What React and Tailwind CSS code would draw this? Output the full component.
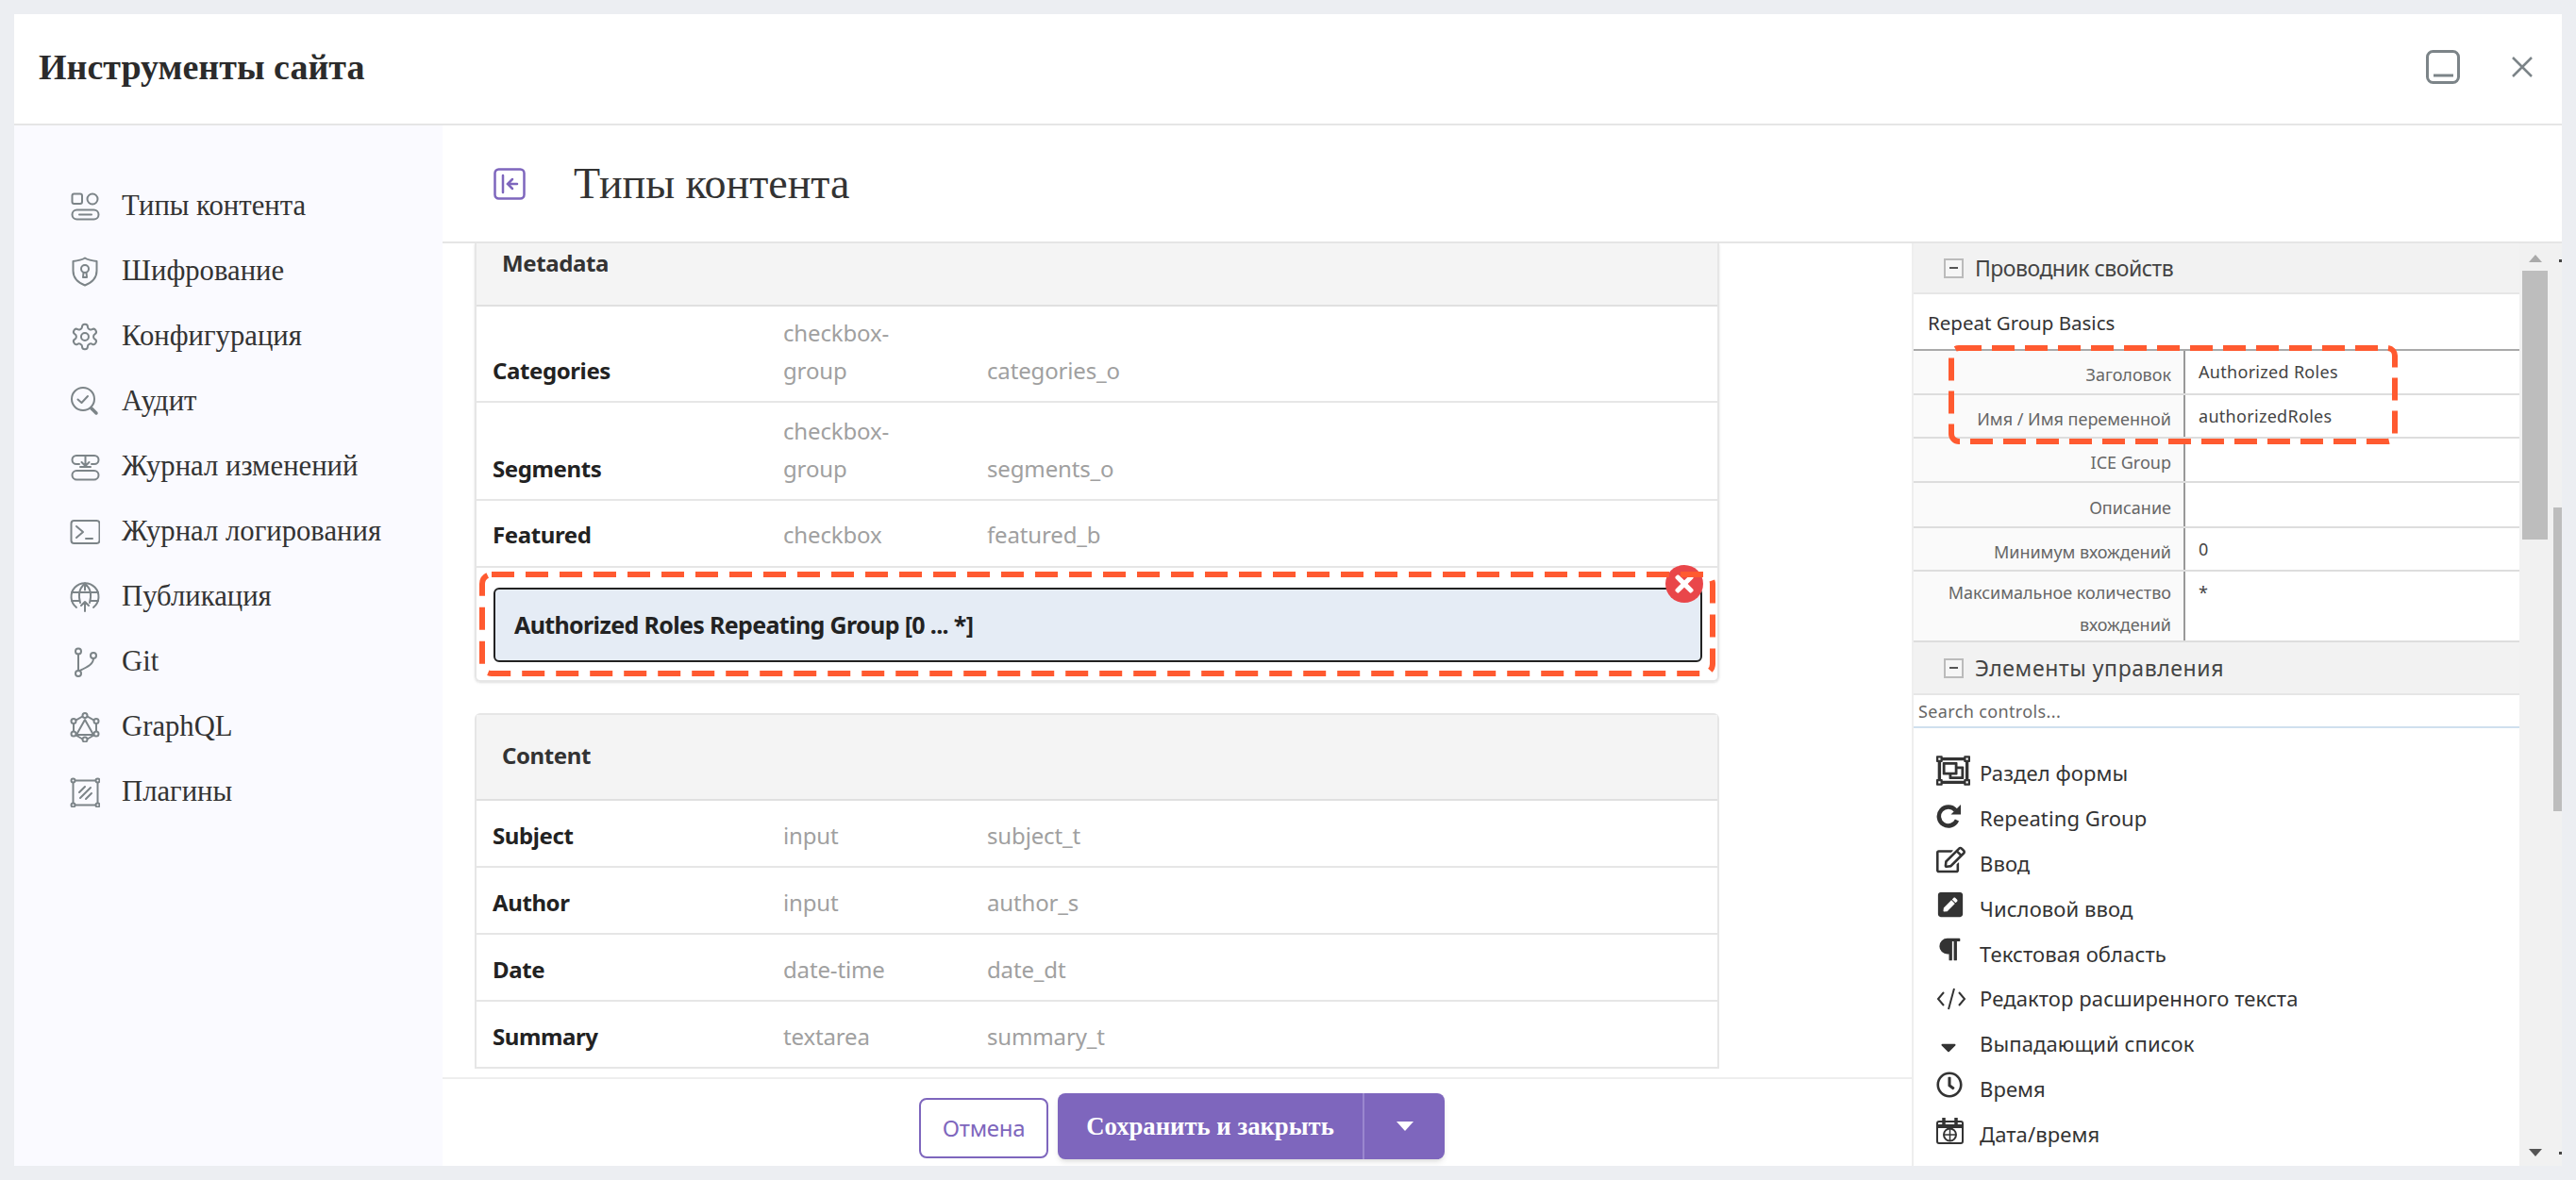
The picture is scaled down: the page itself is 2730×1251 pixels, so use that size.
import { FaRegEdit, FaPenSquare, FaParagraph, FaCaretDown, FaRegClock, FaRegObjectGroup, FaTimes } from 'react-icons/fa';

const sans = "font-['Noto_Sans',sans-serif]";
const serif = "font-['Liberation_Serif',serif]";

const IconBase = ({ children }) => (
  <svg width="32" height="32" viewBox="0 0 32 32" fill="none" stroke="#7c8488" strokeWidth="2" strokeLinecap="round" strokeLinejoin="round" className="shrink-0">
    {children}
  </svg>
);

const menu = [
  {
    label: 'Типы контента',
    icon: (
      <>
        <rect x="2.5" y="2.5" width="10.5" height="10.5" rx="2" />
        <circle cx="24" cy="8" r="5.5" />
        <rect x="2.5" y="19.5" width="28" height="10" rx="5" />
        <path d="M10 24.5h13" />
      </>
    ),
  },
  {
    label: 'Шифрование',
    icon: (
      <>
        <path d="M16 1.5c4 2.5 8 3 12.5 3.5v10c0 7-5 12.5-12.5 15.5C8.5 27.5 3.5 22 3.5 15V5C8 4.5 12 4 16 1.5z" />
        <circle cx="16" cy="13" r="4" />
        <path d="M14.5 17l-.5 5h4l-.5-5" />
      </>
    ),
  },
  {
    label: 'Конфигурация',
    icon: (
      <g transform="scale(1.33)" strokeWidth="1.5">
        <path d="M12.22 2h-.44a2 2 0 0 0-2 2v.18a2 2 0 0 1-1 1.73l-.43.25a2 2 0 0 1-2 0l-.15-.08a2 2 0 0 0-2.73.73l-.22.38a2 2 0 0 0 .73 2.73l.15.1a2 2 0 0 1 1 1.72v.51a2 2 0 0 1-1 1.74l-.15.09a2 2 0 0 0-.73 2.73l.22.38a2 2 0 0 0 2.73.73l.15-.08a2 2 0 0 1 2 0l.43.25a2 2 0 0 1 1 1.73V20a2 2 0 0 0 2 2h.44a2 2 0 0 0 2-2v-.18a2 2 0 0 1 1-1.73l.43-.25a2 2 0 0 1 2 0l.15.08a2 2 0 0 0 2.73-.73l.22-.39a2 2 0 0 0-.73-2.73l-.15-.08a2 2 0 0 1-1-1.74v-.5a2 2 0 0 1 1-1.74l.15-.09a2 2 0 0 0 .73-2.73l-.22-.38a2 2 0 0 0-2.73-.73l-.15.08a2 2 0 0 1-2 0l-.43-.25a2 2 0 0 1-1-1.73V4a2 2 0 0 0-2-2z" />
        <circle cx="12" cy="12" r="3" />
      </g>
    ),
  },
  {
    label: 'Аудит',
    icon: (
      <>
        <circle cx="14" cy="13" r="12" />
        <path d="M8.5 13.5l4 3.5 6.5-7" />
        <path d="M23 23l5 5" strokeWidth="3.5" />
      </>
    ),
  },
  {
    label: 'Журнал изменений',
    icon: (
      <>
        <path d="M10 13H7a4.5 4.5 0 0 1 0-9h19a4.5 4.5 0 0 1 0 9h-3" />
        <path d="M16.5 5v9M12.5 11l4 4 4-4M11 16h11" />
        <rect x="2.5" y="20" width="28" height="9.5" rx="4.7" />
      </>
    ),
  },
  {
    label: 'Журнал логирования',
    icon: (
      <>
        <rect x="1.5" y="4" width="30" height="24" rx="3" />
        <path d="M7 10l7 6-7 6M17 23h7" />
      </>
    ),
  },
  {
    label: 'Публикация',
    icon: (
      <>
        <path d="M7 27A14.5 14.5 0 1 1 25 27" />
        <path d="M16 1.5v7M16 1.5C9 8 9 14 11 22M16 1.5c7 6.5 7 12.5 5 20.5M2 11h28M2 20h8M22 20h8" />
        <path d="M16 31V21M12 25l4-4 4 4" />
      </>
    ),
  },
  {
    label: 'Git',
    icon: (
      <>
        <circle cx="9" cy="4.5" r="3" />
        <circle cx="9" cy="28" r="3" />
        <circle cx="25" cy="9" r="3" />
        <path d="M9 7.5V25M25 12c0 6-6 9-14.5 13" />
      </>
    ),
  },
  {
    label: 'GraphQL',
    icon: (
      <>
        <path d="M16 3L28 10v13l-12 7-12-7V10z" />
        <path d="M16 8L7 24h18z" />
        <circle cx="16" cy="3.5" r="2.5" fill="#fafaff" />
        <circle cx="16" cy="29" r="2.5" fill="#fafaff" />
        <circle cx="4" cy="9.5" r="2.5" fill="#fafaff" />
        <circle cx="28" cy="9.5" r="2.5" fill="#fafaff" />
        <circle cx="4" cy="23" r="2.5" fill="#fafaff" />
        <circle cx="28" cy="23" r="2.5" fill="#fafaff" />
      </>
    ),
  },
  {
    label: 'Плагины',
    icon: (
      <>
        <rect x="3.5" y="3.5" width="26" height="26" />
        <circle cx="3.5" cy="3.5" r="2" fill="#fafaff" />
        <circle cx="29.5" cy="3.5" r="2" fill="#fafaff" />
        <circle cx="3.5" cy="29.5" r="2" fill="#fafaff" />
        <circle cx="29.5" cy="29.5" r="2" fill="#fafaff" />
        <path d="M10 16l6-6M11 22l11-11M17 23l6-6" />
      </>
    ),
  },
];

const metadataRows = [
  { name: 'Categories', type: 'checkbox-group', id: 'categories_o', h: 'h-[102px] pb-[12px]' },
  { name: 'Segments', type: 'checkbox-group', id: 'segments_o', h: 'h-[104px] pb-[12px]' },
  { name: 'Featured', type: 'checkbox', id: 'featured_b', h: 'h-[71px] pb-[13px]' },
];

const contentRows = [
  { name: 'Subject', type: 'input', id: 'subject_t' },
  { name: 'Author', type: 'input', id: 'author_s' },
  { name: 'Date', type: 'date-time', id: 'date_dt' },
  { name: 'Summary', type: 'textarea', id: 'summary_t' },
];

const props = [
  { label: 'Заголовок', value: 'Authorized Roles', h: 'h-[47px]' },
  { label: 'Имя / Имя переменной', value: 'authorizedRoles', h: 'h-[46px]' },
  { label: 'ICE Group', value: '', h: 'h-[47px]' },
  { label: 'Описание', value: '', h: 'h-[48px]' },
  { label: 'Минимум вхождений', value: '0', h: 'h-[46px]' },
  { label: 'Максимальное количество вхождений', value: '*', h: 'h-[75px]' },
];

const CodeIcon = () => (
  <svg width="32" height="26" viewBox="0 0 32 26" fill="none" stroke="#333" strokeWidth="2">
    <path d="M8 6l-6 7 6 7M24 6l6 7-6 7M19 2l-6 22" />
  </svg>
);

const RepeatIcon = () => (
  <svg width="27" height="27" viewBox="0 0 27 27" fill="none">
    <path d="M20.5 8A10 10 0 1 0 22 18.5" stroke="#333" strokeWidth="4.5" />
    <path d="M26 2v10.5H15.5z" fill="#333" />
  </svg>
);

const CalendarIcon = () => (
  <svg width="29" height="29" viewBox="0 0 29 29" fill="none" stroke="#333" strokeWidth="2">
    <rect x="1" y="5" width="27" height="23" rx="2" />
    <path d="M1 10h27" strokeWidth="4" />
    <path d="M8 1v7M21 1v7" strokeWidth="3.5" />
    <circle cx="14.5" cy="19" r="6.5" />
    <path d="M14.5 12.5v13M8 19h13" strokeWidth="1.5" />
  </svg>
);

const controls = [
  { label: 'Раздел формы', icon: <FaRegObjectGroup size={36} />, up: 'mb-[6px]' },
  { label: 'Repeating Group', icon: <RepeatIcon />, up: 'mb-[6px]' },
  { label: 'Ввод', icon: <FaRegEdit size={31} />, up: 'mb-[8px]' },
  { label: 'Числовой ввод', icon: <FaPenSquare size={30} />, up: 'mb-[8px]' },
  { label: 'Текстовая область', icon: <FaParagraph size={27} />, up: 'mb-[10px]' },
  { label: 'Редактор расширенного текста', icon: <CodeIcon />, up: '' },
  { label: 'Выпадающий список', icon: <FaCaretDown size={26} />, up: 'mt-[6px]' },
  { label: 'Время', icon: <FaRegClock size={28} />, up: 'mb-[8px]' },
  { label: 'Дата/время', icon: <CalendarIcon />, up: 'mb-[8px]' },
];

function Row({ row, h }) {
  return (
    <div className={`${h} box-border flex items-end border-b-2 border-[#e6e6e6] text-[24px] leading-[40px]`}>
      <div className="w-[325px] pl-[17px] shrink-0 font-bold tracking-[-0.4px] text-[#222]">{row.name}</div>
      <div className="w-[216px] pr-[60px] shrink-0 tracking-[-0.15px] text-[#a0a0a0]">{row.type}</div>
      <div className="tracking-[-0.15px] text-[#a0a0a0]">{row.id}</div>
    </div>
  );
}

function PanelHeader({ title, h, spacing }) {
  return (
    <div className={`${h} box-border flex items-center bg-[#f2f2f2] pl-[32px] border-b-2 border-[#e6e6e6] shrink-0`}>
      <span className="w-[21px] h-[21px] flex items-center justify-center border-2 border-[#bbb] bg-[#f6f6f6] mr-[12px]">
        <span className="w-[9px] h-[2px] bg-[#555]" />
      </span>
      <span className={`${spacing} text-[23px] text-[#444]`}>{title}</span>
    </div>
  );
}

export default function App() {
  return (
    <div className={`${sans} h-[1251px] w-[2730px] bg-[#eceef2] p-[15px] overflow-hidden`}>
      <div className="h-full bg-white flex flex-col overflow-hidden">
        <header className="h-[118px] shrink-0 box-border border-b-2 border-[#e5e5e5] flex items-center pl-[26px] pr-[30px] pb-[4px]">
          <h1 className={`${serif} text-[38px] font-bold text-[#2b2b2b]`}>Инструменты сайта</h1>
          <div className="ml-auto flex items-center gap-[54px]">
            <svg width="36" height="36" viewBox="0 0 36 36" fill="none" stroke="#7c8488" strokeWidth="3">
              <rect x="1.5" y="1.5" width="33" height="33" rx="6" />
              <path d="M8 27h21" />
            </svg>
            <svg width="24" height="24" viewBox="0 0 24 24" fill="none" stroke="#7c8488" strokeWidth="2.5">
              <path d="M2 2l20 20M22 2L2 22" />
            </svg>
          </div>
        </header>

        <div className="flex-1 flex min-h-0">
          <aside className="w-[454px] shrink-0 bg-[#fafaff] pt-[51px] pl-[59px]">
            {menu.map((item) => (
              <div key={item.label} className="h-[69px] flex items-center gap-[23px]">
                <IconBase>{item.icon}</IconBase>
                <span className={`${serif} text-[30.7px] text-[#333]`}>{item.label}</span>
              </div>
            ))}
          </aside>

          <main className="flex-1 flex flex-col min-w-0">
            <div className="h-[125px] shrink-0 box-border border-b-2 border-[#e5e5e5] flex items-center pl-[54px]">
              <svg width="34" height="34" viewBox="0 0 34 34" fill="none" stroke="#7e66bd" strokeWidth="2.5" strokeLinecap="round">
                <rect x="1.5" y="1.5" width="31" height="31" rx="4" />
                <path d="M10 8v18M25 17H16M20 12l-5 5 5 5" />
              </svg>
              <h2 className={`${serif} ml-[51px] text-[46px] font-normal text-[#333]`}>Типы контента</h2>
            </div>

            <div className="flex-1 flex min-h-0">
              <div className="w-[1559px] shrink-0 flex flex-col min-h-0 border-r-2 border-[#eee] box-border">
                <div className="h-[884px] shrink-0 overflow-hidden pl-[34px] box-border">
                  <section className="relative w-[1319px] box-border border-x-2 border-b-2 border-[#e6e6e6] rounded-b-md shadow-sm">
                    <div className="h-[67px] box-border bg-[#f4f4f4] border-b-2 border-[#e0e0e0] pl-[27px] pt-[1px] text-[24px] font-bold leading-[40px] tracking-[-0.4px] text-[#333]">Metadata</div>
                    {metadataRows.map((r) => <Row key={r.name} row={r} h={r.h} />)}
                    <div className="h-[119px] box-border pt-[21px] pl-[18px]">
                      <div className="w-[1281px] h-[79px] box-border flex items-center pl-[20px] bg-[#e5ecf5] border-2 border-[#222] rounded-md text-[25px] font-bold tracking-[-0.64px] text-[#222]">
                        Authorized Roles Repeating Group [0 ... *]
                      </div>
                    </div>
                    <span className="absolute left-[1260px] top-[341px] w-[40px] h-[40px] rounded-full bg-[#e9464a] flex items-center justify-center text-white">
                      <FaTimes size={28} />
                    </span>
                    <svg className="absolute left-[3px] top-[348px]" width="1310" height="111" fill="none" stroke="#ff5a30" strokeWidth="6" strokeDasharray="24 12">
                      <rect x="3" y="3" width="1304" height="105" rx="10" />
                    </svg>
                  </section>

                  <section className="mt-[33px] w-[1319px] box-border border-x-2 border-t-2 border-[#e6e6e6] rounded-t-md">
                    <div className="h-[91px] box-border bg-[#f4f4f4] border-b-2 border-[#e0e0e0] pl-[27px] pb-[3px] flex items-center text-[24px] font-bold tracking-[-0.4px] text-[#333]">Content</div>
                    {contentRows.map((r) => <Row key={r.name} row={r} h="h-[71px] pb-[12px]" />)}
                  </section>
                </div>

                <footer className="flex-1 box-border border-t-2 border-[#eee] flex items-start justify-center gap-[10px] pt-[15px] pl-[10px]">
                  <button className="mt-[5px] w-[137px] h-[64px] box-border border-2 border-[#7e66bd] rounded-lg bg-white text-[24px] tracking-[-0.3px] text-[#7e66bd]">Отмена</button>
                  <div className="w-[410px] h-[70px] flex rounded-lg bg-[#7e66bd] shadow-md text-white">
                    <div className={`${serif} w-[325px] flex items-center justify-center text-[26.7px] font-bold border-r-2 border-[#9a87cf]`}>Сохранить и закрыть</div>
                    <div className="flex-1 flex items-center justify-center">
                      <span className="w-0 h-0 border-x-[9px] border-x-transparent border-t-[10px] border-t-white" />
                    </div>
                  </div>
                </footer>
              </div>

              <div className="flex-1 flex min-w-0">
                <div className="w-[642px] shrink-0 relative flex flex-col overflow-hidden">
                  <PanelHeader title="Проводник свойств" h="h-[54px]" spacing="tracking-[-0.5px]" />
                  <div className="h-[60px] box-border shrink-0 flex items-center pl-[15px] pt-[2px] border-b-2 border-[#aaa] text-[20.5px] text-[#333]">Repeat Group Basics</div>
                  {props.map((p) => (
                    <div key={p.label} className={`${p.h} box-border shrink-0 flex border-b-2 border-[#ddd] text-[18px] leading-[34px]`}>
                      <div className="w-[288px] shrink-0 box-border bg-[#fafafa] border-r-2 border-[#999] pr-[13px] pl-[20px] pt-[5px] flex items-center justify-end text-right text-[#666]">{p.label}</div>
                      <div className="pl-[14px] pt-[5px] tracking-[0.3px] text-[#444]">{p.value}</div>
                    </div>
                  ))}
                  <PanelHeader title="Элементы управления" h="h-[56px]" spacing="tracking-[0.6px]" />
                  <div className="h-[35px] box-border shrink-0 flex items-center pl-[5px] pt-[2px] border-b-2 border-[#cfe0ee] text-[18px] tracking-[0.37px] text-[#666]">Search controls...</div>
                  <div className="pt-[24px] pl-[24px]">
                    {controls.map((c) => (
                      <div key={c.label} className="h-[47.8px] flex items-center text-[22px] tracking-[0.1px] text-[#333]">
                        <span className={`${c.up} w-[46px] shrink-0 flex text-[#333]`}>{c.icon}</span>
                        <span>{c.label}</span>
                      </div>
                    ))}
                  </div>
                  <svg className="absolute left-[37px] top-[108px]" width="476" height="105" fill="none" stroke="#ff5a30" strokeWidth="6" strokeDasharray="24 11">
                    <rect x="3" y="3" width="470" height="99" rx="8" />
                  </svg>
                </div>

                <div className="w-[33px] shrink-0 bg-[#f1f1f1] flex flex-col items-center pt-[12px]">
                  <span className="w-0 h-0 border-x-[7px] border-x-transparent border-b-[8px] border-b-[#aaa]" />
                  <span className="mt-[9px] w-[27px] h-[285px] bg-[#bdbdbd]" />
                  <span className="mt-auto mb-[10px] w-0 h-0 border-x-[7px] border-x-transparent border-t-[8px] border-t-[#555]" />
                </div>
                <div className="flex-1 bg-[#f1f1f1] pl-[3px] pt-[17px] flex flex-col">
                  <span className="self-end w-[3px] h-[3px] bg-[#444]" />
                  <div className="mt-[260px] w-full h-[322px] bg-[#bdbdbd]" />
                  <span className="self-end mt-auto mb-[12px] w-[3px] h-[3px] bg-[#444]" />
                </div>
              </div>
            </div>
          </main>
        </div>
      </div>
    </div>
  );
}
